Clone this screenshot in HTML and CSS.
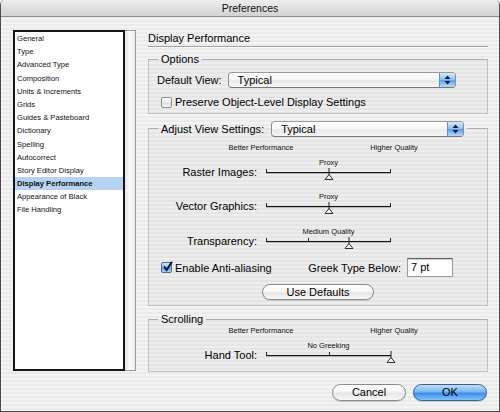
FILE: index.html
```html
<!DOCTYPE html>
<html>
<head>
<meta charset="utf-8">
<title>Preferences</title>
<link rel="stylesheet" href="styles.css">
</head>
<body>
<div class="window">
  <div class="titlebar">Preferences</div>
  <div class="body">
    <div class="panes">
      <div class="sidebar">
        <ul class="list">
          <li>General</li>
          <li>Type</li>
          <li>Advanced Type</li>
          <li>Composition</li>
          <li>Units &amp; Increments</li>
          <li>Grids</li>
          <li>Guides &amp; Pasteboard</li>
          <li>Dictionary</li>
          <li>Spelling</li>
          <li>Autocorrect</li>
          <li>Story Editor Display</li>
          <li class="sel">Display Performance</li>
          <li>Appearance of Black</li>
          <li>File Handling</li>
        </ul>
        <div class="track"></div>
      </div>
      <div class="main">
        <div class="heading">Display Performance</div>

        <fieldset class="group g-options">
          <legend>Options</legend>
          <div class="dv-row">
            <span class="dv-label">Default View:</span>
            <div class="popup popup-1">
              <span class="val">Typical</span>
              <span class="arr"><svg width="7" height="10" viewBox="0 0 7 10"><path d="M3.5 0.5 L6.5 4 L0.5 4 Z M0.5 6 L6.5 6 L3.5 9.5 Z" fill="#10203a"/></svg></span>
            </div>
          </div>
          <div class="check-row">
            <span class="cb"></span>
            <span>Preserve Object-Level Display Settings</span>
          </div>
        </fieldset>

        <fieldset class="group g-adjust">
          <legend class="lg-popup">
            <span class="av-label">Adjust View Settings:</span>
            <div class="popup popup-2">
              <span class="val">Typical</span>
              <span class="arr"><svg width="7" height="10" viewBox="0 0 7 10"><path d="M3.5 0.5 L6.5 4 L0.5 4 Z M0.5 6 L6.5 6 L3.5 9.5 Z" fill="#10203a"/></svg></span>
            </div>
          </legend>
          <div class="scale-head"><span>Better Performance</span><span>Higher Quality</span></div>
          <div class="sliders">
            <span class="s-label">Raster Images:</span>
            <div class="slider">
              <div class="caption">Proxy</div>
              <div class="strack">
                <span class="line"></span>
                <span class="tick" style="left:0%"></span>
                <span class="tick" style="left:calc(100% - 1px)"></span>
                <svg class="thumb" style="left:50%" width="10" height="12" viewBox="0 0 10 12"><path d="M5 0 V7" stroke="#222" stroke-width="1"/><path d="M1 11.5 L5 6.5 L9 11.5 Z" fill="#f0f0f0" stroke="#333" stroke-width="1"/></svg>
              </div>
            </div>

            <span class="s-label">Vector Graphics:</span>
            <div class="slider">
              <div class="caption">Proxy</div>
              <div class="strack">
                <span class="line"></span>
                <span class="tick" style="left:0%"></span>
                <span class="tick" style="left:calc(100% - 1px)"></span>
                <svg class="thumb" style="left:50%" width="10" height="12" viewBox="0 0 10 12"><path d="M5 0 V7" stroke="#222" stroke-width="1"/><path d="M1 11.5 L5 6.5 L9 11.5 Z" fill="#f0f0f0" stroke="#333" stroke-width="1"/></svg>
              </div>
            </div>

            <span class="s-label">Transparency:</span>
            <div class="slider">
              <div class="caption">Medium Quality</div>
              <div class="strack">
                <span class="line"></span>
                <span class="tick" style="left:0%"></span>
                <span class="tick" style="left:33.3%"></span>
                <span class="tick" style="left:calc(100% - 1px)"></span>
                <svg class="thumb" style="left:66.7%" width="10" height="12" viewBox="0 0 10 12"><path d="M5 0 V7" stroke="#222" stroke-width="1"/><path d="M1 11.5 L5 6.5 L9 11.5 Z" fill="#f0f0f0" stroke="#333" stroke-width="1"/></svg>
              </div>
            </div>
          </div>

          <div class="aa-row">
            <div class="aa-left">
              <span class="cb checked"><svg width="11" height="11" viewBox="0 0 11 11"><path d="M2 5.5 L4.6 9 L10 0.8" fill="none" stroke="#0d1830" stroke-width="2"/></svg></span>
              <span>Enable Anti-aliasing</span>
            </div>
            <div class="aa-right">
              <span class="greek-label">Greek Type Below:</span>
              <span class="field">7 pt</span>
            </div>
          </div>
          <div class="btn btn-defaults">Use Defaults</div>
        </fieldset>

        <fieldset class="group g-scroll">
          <legend>Scrolling</legend>
          <div class="scale-head"><span>Better Performance</span><span>Higher Quality</span></div>
          <div class="sliders">
            <span class="s-label">Hand Tool:</span>
            <div class="slider">
              <div class="caption">No Greeking</div>
              <div class="strack">
                <span class="line"></span>
                <span class="tick" style="left:0%"></span>
                <span class="tick" style="left:50%"></span>
                <svg class="thumb" style="left:100%" width="10" height="12" viewBox="0 0 10 12"><path d="M5 0 V7" stroke="#222" stroke-width="1"/><path d="M1 11.5 L5 6.5 L9 11.5 Z" fill="#f0f0f0" stroke="#333" stroke-width="1"/></svg>
              </div>
            </div>
          </div>
        </fieldset>
      </div>
    </div>
    <div class="buttons">
      <div class="btn btn-cancel">Cancel</div>
      <div class="btn btn-ok">OK</div>
    </div>
  </div>
</div>
</body>
</html>
```

FILE: styles.css
```css
html, body {
  margin: 0;
  padding: 0;
}
body {
  width: 500px;
  height: 412px;
  overflow: hidden;
  background: #fff;
  font-family: "Liberation Sans", Arial, sans-serif;
  font-size: 11px;
  color: #000;
}
.window {
  box-sizing: border-box;
  width: 500px;
  height: 412px;
  border: 1px solid #4d4d4d;
  border-top: none;
  border-radius: 5px 5px 0 0;
  overflow: hidden;
  background: repeating-linear-gradient(180deg, #ebebeb 0, #ebebeb 2px, #f3f3f3 2px, #f3f3f3 4px);
  display: flex;
  flex-direction: column;
}
.titlebar {
  height: 16px;
  line-height: 16px;
  text-align: center;
  font-size: 10.5px;
  color: #111;
  background: linear-gradient(#eeeeee, #dcdcdc 60%, #d2d2d2);
  border-bottom: 1px solid #8c8c8c;
}
.body {
  padding: 13px 11px 0 12px;
  display: flex;
  flex-direction: column;
}
.panes {
  display: flex;
  align-items: flex-start;
}

/* sidebar */
.sidebar {
  display: flex;
  width: 123px;
  height: 341px;
}
.list {
  box-sizing: border-box;
  width: 112px;
  height: 341px;
  margin: 0;
  padding: 0;
  list-style: none;
  background: #fff;
  border: 2px solid #151515;
}
.list li {
  height: 13.2px;
  line-height: 13.2px;
  font-size: 7.6px;
  padding-left: 2px;
  color: #111;
  white-space: nowrap;
}
.list li.sel {
  background: #b7d3f2;
  font-weight: bold;
}
.track {
  box-sizing: border-box;
  width: 11px;
  height: 341px;
  border: 1px solid #9c9c9c;
  border-left: none;
  background: linear-gradient(90deg, #e6e6e6, #fbfbfb 50%, #ececec);
}

/* main */
.main {
  margin-left: 12px;
  width: 340px;
  padding-top: 1px;
}
.heading {
  line-height: 14px;
  padding-bottom: 1px;
  border-bottom: 1px solid #a3a3a3;
  box-shadow: 0 1px 0 #fbfbfb;
}
.group {
  margin: 6px 0 0;
  padding: 0;
  min-width: 0;
  border: 1px solid #c2c2c2;
  border-top-color: #adadad;
  background: rgba(0, 0, 0, 0.022);
}
.group legend {
  margin-left: 9px;
  padding: 0 3px;
  line-height: 12px;
  height: 12px;
}
.g-adjust {
  margin-top: 6.5px;
}
.g-scroll {
  margin-top: 7px;
}
.g-options {
  padding-bottom: 4px;
}
.g-adjust {
  padding-bottom: 5px;
}
.g-scroll {
  padding-bottom: 7px;
}

/* popups */
.popup {
  box-sizing: border-box;
  height: 16px;
  display: flex;
  border: 1px solid #8d8d8d;
  border-top-color: #9a9a9a;
  border-bottom-color: #777;
  border-radius: 4px;
  overflow: hidden;
  background: linear-gradient(#ffffff, #f7f7f7 45%, #e9e9e9 55%, #f6f6f6);
}
.popup .val {
  flex: 1;
  padding-left: 9px;
  line-height: 14px;
}
.popup .arr {
  width: 15px;
  border-left: 1px solid #6d8cb4;
  background: linear-gradient(#d5e9fd, #8cc0f2 48%, #5d9fe6 52%, #b3daff);
  display: flex;
  align-items: center;
  justify-content: center;
}
.popup-1 {
  width: 228px;
}
.popup-2 {
  width: 193px;
}
.dv-row {
  display: flex;
  align-items: center;
  height: 16px;
  margin: 7px 0 0 8px;
}
.dv-label {
  margin-right: 6px;
}
.lg-popup {
  display: flex;
  align-items: center;
}
.group legend.lg-popup {
  height: 16px;
  line-height: 14px;
  padding-right: 3px;
}
.av-label {
  margin-right: 7px;
}

/* checkboxes */
.check-row {
  display: flex;
  align-items: center;
  height: 14px;
  margin: 7px 0 0 12px;
}
.cb {
  box-sizing: border-box;
  width: 11px;
  height: 11px;
  margin-right: 3px;
  border: 1px solid #8e8e8e;
  border-radius: 2px;
  background: linear-gradient(#ffffff, #ececec 50%, #dcdcdc 55%, #f4f4f4);
  display: flex;
  align-items: center;
  justify-content: center;
}
.cb.checked {
  border-color: #4f6e98;
  background: linear-gradient(#cfe6fd, #86bdf2 48%, #5c9fe6 52%, #a9d5fd);
  overflow: visible;
}
.cb.checked svg {
  flex: none;
  margin: -2px -1px 0 0;
}

/* sliders */
.scale-head {
  display: flex;
  padding-left: 62px;
  font-size: 7.5px;
  line-height: 9px;
  margin-top: 6px;
  color: #111;
}
.g-scroll .scale-head {
  margin-top: 0.5px;
}
.scale-head span {
  width: 100px;
  text-align: center;
  white-space: nowrap;
}
.scale-head span + span {
  margin-left: 33px;
}
.sliders {
  display: grid;
  grid-template-columns: 108px 125px;
  column-gap: 9px;
  row-gap: 11.5px;
  margin-top: 6px;
}
.s-label {
  text-align: right;
  line-height: 13px;
  margin-top: 8px;
  white-space: nowrap;
}
.slider {
  height: 23px;
}
.caption {
  text-align: center;
  font-size: 7.5px;
  line-height: 9px;
  white-space: nowrap;
  color: #111;
}
.strack {
  position: relative;
  height: 14px;
}
.line {
  position: absolute;
  left: 0;
  right: 0;
  top: 5px;
  height: 1px;
  background: #151515;
  box-shadow: 0 0.5px 0 rgba(0, 0, 0, 0.45);
}
.tick {
  position: absolute;
  top: 2px;
  width: 1px;
  height: 4px;
  background: #222;
}
.thumb {
  position: absolute;
  top: 1px;
  margin-left: -5px;
}

/* anti-aliasing row */
.aa-row {
  display: flex;
  align-items: center;
  justify-content: space-between;
  height: 19px;
  margin-top: 8.5px;
  padding: 0 34px 0 12px;
}
.aa-left, .aa-right {
  display: flex;
  align-items: center;
}
.greek-label {
  margin-right: 6px;
}
.field {
  box-sizing: border-box;
  width: 46px;
  height: 19px;
  line-height: 17px;
  padding-left: 3px;
  background: #fff;
  border: 1px solid #9a9a9a;
  border-top-color: #5e5e5e;
  box-shadow: inset 0 1px 1px rgba(0, 0, 0, 0.2);
}

/* buttons */
.btn {
  box-sizing: border-box;
  height: 16px;
  line-height: 14px;
  text-align: center;
  border: 1px solid #8a8a8a;
  border-radius: 8px;
  background: linear-gradient(#ffffff, #f6f6f6 45%, #e6e6e6 55%, #f8f8f8);
  box-shadow: 0 1px 1px rgba(0, 0, 0, 0.15);
}
.btn-defaults {
  width: 112px;
  margin: 7px auto 0;
}
.buttons {
  display: flex;
  justify-content: flex-end;
  margin-top: 12.5px;
  margin-right: 1px;
}
.btn-cancel, .btn-ok {
  width: 74px;
  height: 17px;
  line-height: 15px;
  border-radius: 9px;
}
.btn-ok {
  margin-left: 7px;
  border-color: #3b5d90;
  background: linear-gradient(#c2defa, #7ab6f0 45%, #3f8de6 55%, #7fc4ff);
}
```
